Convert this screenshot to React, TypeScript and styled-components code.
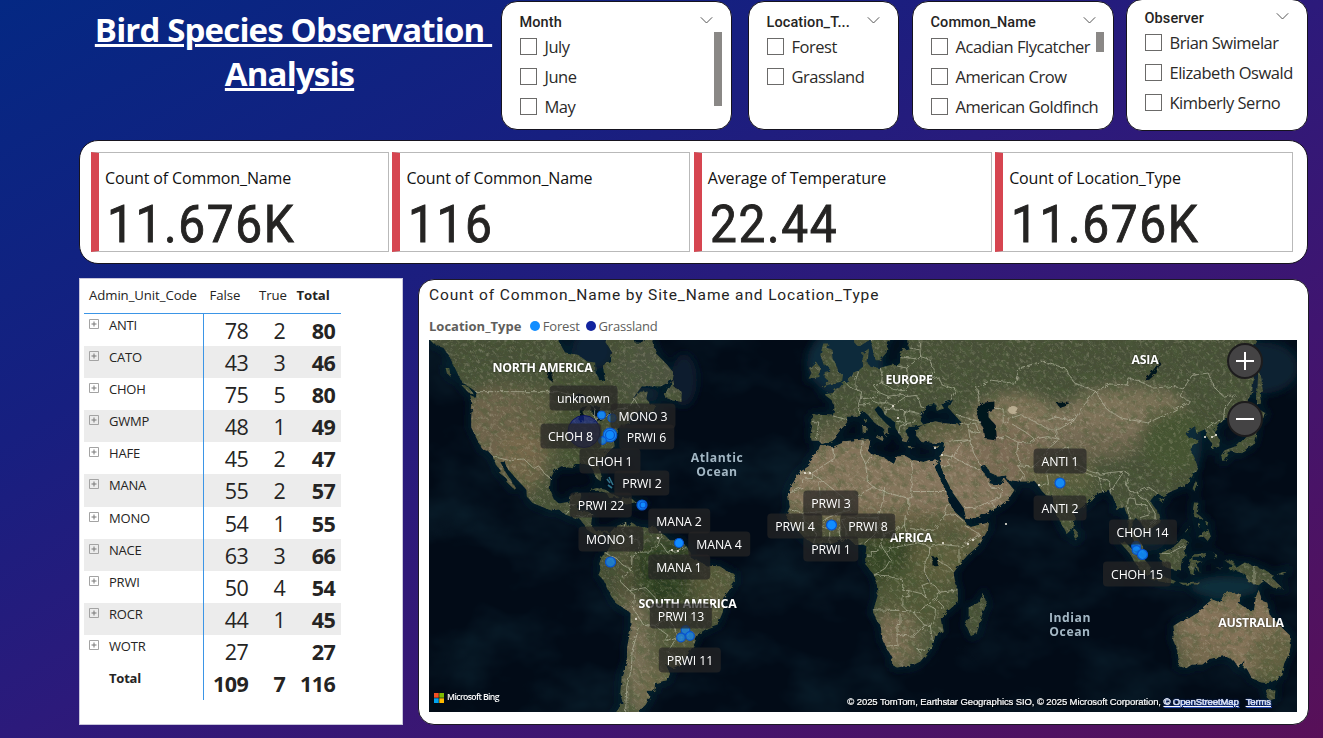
import React from "react";
import styled, { createGlobalStyle, css } from "styled-components";

const ui = `"Open Sans", "Noto Sans", sans-serif`;
const din = `Roboto, "Liberation Sans", sans-serif`;

const GlobalStyle = createGlobalStyle`
  * { box-sizing: border-box; }
  body { margin: 0; overflow: hidden; }
`;

const Page = styled.main`
  width: 1323px;
  height: 738px;
  overflow: hidden;
  background: linear-gradient(to bottom right, #042883 0%, #171f80 30%, #2c1a7b 50%, #401570 72%, #581058 100%);
  font-family: ${ui};
  color: #252423;
`;

const TopBar = styled.header`
  display: flex;
  align-items: flex-start;
  height: 140px;
`;

const Title = styled.h1`
  width: 500px;
  margin: 0;
  padding: 8px 0 0 79px;
  color: #fff;
  font-size: 33px;
  line-height: 44px;
  font-weight: 700;
  letter-spacing: -0.85px;
  text-align: center;
  white-space: pre;
`;

const TitleLine = styled.span<{ $hang?: number }>`
  display: block;
  margin-right: ${(p) => -(p.$hang ?? 0)}px;
  text-decoration: underline;
  text-decoration-thickness: 3px;
  text-underline-offset: 2px;
`;

/* ---------- slicers ---------- */

const SlicerBox = styled.section<{ $w: number; $gap: number; $raised?: boolean }>`
  width: ${(p) => p.$w}px;
  height: ${(p) => (p.$raised ? 132 : 129)}px;
  margin: ${(p) => (p.$raised ? -1 : 1)}px 0 0 ${(p) => p.$gap}px;
  padding: ${(p) => (p.$raised ? 10 : 12)}px 9px 0 18px;
  background: #fff;
  border: 1px solid #15131f;
  border-radius: 16px;
  flex: none;
`;

const SlicerHead = styled.div<{ $chevron: number }>`
  display: flex;
  justify-content: space-between;
  height: 17px;
  padding-right: ${(p) => p.$chevron}px;
  font: 500 14.5px/18px ${din};
  letter-spacing: 0.1px;
`;

const SlicerBody = styled.div`
  display: flex;
  justify-content: space-between;
`;

const Options = styled.ul`
  list-style: none;
  margin: 0;
  padding: 0;
`;

const Option = styled.li`
  display: flex;
  align-items: center;
  gap: 8px;
  height: 30.4px;
  font-size: 16.5px;
  letter-spacing: -0.48px;
  white-space: nowrap;
  color: #2b2a29;
`;

const Check = styled.span`
  width: 17px;
  height: 17px;
  border: 1px solid #6b6a69;
  background: #fff;
  flex: none;
`;

const ScrollThumb = styled.span<{ $h: number }>`
  width: 8px;
  height: ${(p) => p.$h}px;
  margin: 1px 0 0 -9px;
  background: #8a8886;
  flex: none;
`;

const Chevron = () => (
  <svg width="13" height="18" viewBox="0 0 13 18" fill="none" stroke="#555" strokeWidth="1">
    <path d="M0.8 3.3 L6.5 9 L12.2 3.3" />
  </svg>
);

type SlicerProps = {
  title: string; items: string[]; w: number; gap: number; chevron: number; thumb?: number; raised?: boolean;
};

const Slicer = ({ title, items, w, gap, chevron, thumb, raised }: SlicerProps) => (
  <SlicerBox $w={w} $gap={gap} $raised={raised}>
    <SlicerHead $chevron={chevron}>{title}<Chevron /></SlicerHead>
    <SlicerBody>
      <Options>
        {items.map((i) => <Option key={i}><Check />{i}</Option>)}
      </Options>
      {thumb ? <ScrollThumb $h={thumb} /> : null}
    </SlicerBody>
  </SlicerBox>
);

/* ---------- KPI cards ---------- */

const KpiPanel = styled.section`
  display: flex;
  gap: 3.4px;
  width: 1229px;
  height: 124px;
  margin-left: 79px;
  padding: 11px 0 0 11px;
  background: #fff;
  border: 1px solid #17141f;
  border-radius: 19px;
`;

const KpiCard = styled.article`
  width: 298px;
  height: 100px;
  border: 1px solid #b9b9b9;
  border-width: 1px 1.5px 1.5px 0;
  border-left: 8px solid #d64550;
  padding: 14px 0 0 6px;
  flex: none;
`;

const KpiLabel = styled.div`
  font-size: 16px;
  line-height: 22px;
  letter-spacing: -0.14px;
  color: #111;
`;

const KpiValue = styled.div`
  margin: 4px 0 0 2px;
  font: 400 52.5px/62px ${din};
  letter-spacing: 1.8px;
  -webkit-text-stroke: 0.9px #252423;
  transform: scaleX(0.91);
  transform-origin: 0 50%;
`;

/* ---------- matrix ---------- */

const Lower = styled.div`
  display: flex;
  align-items: flex-start;
  gap: 15px;
  margin: 14px 0 0 79px;
`;

const MatrixPanel = styled.section`
  width: 324px;
  height: 447px;
  padding: 0 0 0 4px;
  background: #fff;
  border: 1px solid #c9c6dc;
`;

const Row = styled.div<{ $shade?: boolean; $total?: boolean }>`
  display: grid;
  grid-template-columns: 120px 50px 37px 50px;
  width: 257px;
  height: 32.1px;
  background: ${(p) => (p.$shade ? "#ececec" : "#fff")};
  font-weight: ${(p) => (p.$total ? 700 : 400)};
`;

const HeadRow = styled(Row)`
  height: 35px;
  border-bottom: 1px solid #3b95e6;
  font-size: 13.2px;
  line-height: 32px;
  letter-spacing: -0.08px;
`;

const HeadCell = styled.span<{ $x: number; $bold?: boolean }>`
  padding-left: ${(p) => p.$x}px;
  white-space: nowrap;
  font-weight: ${(p) => (p.$bold ? 700 : 400)};
`;

const CodeCell = styled.span`
  display: flex;
  gap: 10px;
  padding: 1px 0 0 5px;
  border-right: 1px solid #3b95e6;
  font-size: 13px;
  line-height: 21px;
  letter-spacing: -0.2px;

  svg { margin-top: 4px; flex: none; }
`;

const NumCell = styled.span<{ $bold?: boolean }>`
  padding-right: 5.6px;
  font-size: 21.5px;
  line-height: 33px;
  letter-spacing: -0.5px;
  text-align: right;
  ${(p) => p.$bold && css`font-weight: 700;`}
`;

const Expand = ({ hidden }: { hidden?: boolean }) => (
  <svg width="10" height="10" viewBox="0 0 10 10" fill="none" stroke="#a3a3a3" visibility={hidden ? "hidden" : "visible"}>
    <path d="M.5 .5h9v9h-9z" />
    <path d="M2.5 5h5M5 2.5v5" stroke="#777" />
  </svg>
);

const rows: [string, string, string, string][] = [
  ["ANTI", "78", "2", "80"], ["CATO", "43", "3", "46"], ["CHOH", "75", "5", "80"],
  ["GWMP", "48", "1", "49"], ["HAFE", "45", "2", "47"], ["MANA", "55", "2", "57"],
  ["MONO", "54", "1", "55"], ["NACE", "63", "3", "66"], ["PRWI", "50", "4", "54"],
  ["ROCR", "44", "1", "45"], ["WOTR", "27", "", "27"], ["Total", "109", "7", "116"],
];

/* ---------- map ---------- */

const MapPanel = styled.section`
  width: 891px;
  height: 446px;
  margin-top: 1px;
  padding: 5px 10px 0;
  background: #fff;
  border: 1px solid #1d1926;
  border-radius: 16px;
`;

const MapTitle = styled.h2`
  margin: 0;
  font: 400 15.5px/20px ${din};
  letter-spacing: 0.86px;
  color: #252423;
`;

const Legend = styled.div`
  display: flex;
  align-items: center;
  height: 35px;
  padding-top: 6px;
  font-size: 13px;
  letter-spacing: -0.2px;
  color: #605e5c;

  b { margin-right: 9px; letter-spacing: 0; }
`;

const LegendItem = styled.span<{ $c: string }>`
  display: flex;
  align-items: center;
  gap: 2.5px;
  margin-right: 6.5px;

  &::before {
    content: "";
    width: 10px;
    height: 10px;
    border-radius: 50%;
    background: ${(p) => p.$c};
  }
`;

const MapView = styled.div`
  position: relative;
  width: 868px;
  height: 372px;
  overflow: hidden;
  background: #020b17;

  > svg { display: block; }
`;

const Pin = styled.span<{ $x: number; $y: number }>`
  position: absolute;
  left: ${(p) => p.$x - 429}px;
  top: ${(p) => p.$y - 340}px;
  transform: translate(-50%, -50%);
  white-space: nowrap;
`;

const Tag = styled(Pin)`
  padding: 0 8px;
  border-radius: 4px;
  background: rgba(38, 37, 37, 0.7);
  color: #fff;
  font-size: 12.3px;
  line-height: 25px;
  letter-spacing: -0.1px;
`;

const Region = styled(Pin)`
  color: #fff;
  font-size: 12.3px;
  line-height: 14px;
  font-weight: 700;
  letter-spacing: -0.25px;
  text-shadow: 0 0 2px rgba(0, 0, 0, 0.7);
`;

const Ocean = styled(Pin)`
  color: #a3b7c4;
  font-size: 12.2px;
  line-height: 13.5px;
  font-weight: 700;
  letter-spacing: 0.55px;
  text-align: center;
  white-space: pre;
`;

const ZoomButton = styled.button`
  position: absolute;
  right: 34px;
  width: 36px;
  height: 36px;
  padding: 0;
  border: 2px solid #1d1c1d;
  border-radius: 50%;
  background: #444344;

  svg { display: block; }
`;
const ZoomIn = styled(ZoomButton)`top: 3px;`;
const ZoomOut = styled(ZoomButton)`top: 61px;`;

const Bing = styled.div`
  position: absolute;
  left: 5px;
  bottom: 7px;
  display: flex;
  align-items: center;
  gap: 3px;
  color: #fff;
  font-size: 8.7px;
  line-height: 15px;
  font-weight: 600;
  letter-spacing: -0.62px;
`;

const Credits = styled.div`
  position: absolute;
  right: 26px;
  bottom: 3px;
  color: #fff;
  font: 400 9.5px/14px "Liberation Sans", Arial, sans-serif;
  letter-spacing: -0.1px;
  text-shadow: 1px 1px 1px #000;
  white-space: nowrap;
  -webkit-text-stroke: 0.2px #fff;
`;

const CreditLink = styled.span`
  margin-right: 7px;
  color: #c3d1f2;
  text-decoration: underline;
  text-shadow: 0 0 2px #2c50c0, 1px 1px 1px #2344ac;

  &:last-child { margin-right: 0; }
`;

/* Web Mercator projection; coordinates are lon,lat pairs. */
const project = (lon: number, lat: number) => {
  const y = 558 - 169 * Math.log(Math.tan(Math.PI / 4 + (lat * Math.PI) / 360));
  return `${(838 + 2.95 * lon).toFixed(1)} ${y.toFixed(1)}`;
};
const line = (pts: string) =>
  "M" + pts.trim().split(/\s+/).map((p) => { const [a, b] = p.split(",").map(Number); return project(a, b); }).join("L");
const shape = (pts: string) => line(pts) + "Z";

const land = [
  // North America
  "-140,62 -139.5,59.8 -137,58.5 -134,58 -132,56.5 -130.5,54.8 -129,53 -127.5,51 -124.5,49.8 -122.8,49 -122.6,47.6 -124.7,48.3 -124,46.2 -124.3,43 -124.3,40.4 -122.5,37.6 -120.6,34.6 -118.4,33.9 -117.2,32.7 -116,30.3 -114.2,28.2 -115,27.8 -112.3,26 -112,24.6 -110,22.9 -109.5,23.3 -111,25.6 -112.7,28 -114.7,31.3 -113,31.2 -112.2,29 -110.5,27.5 -109.2,26 -107,24 -105.6,22.5 -105.5,20.4 -103.5,18.3 -101.5,17.5 -97,15.8 -94.7,16.2 -92.3,14.5 -89.5,13.5 -87.5,13 -85.8,11 -85.6,10 -83.6,8.6 -81.5,7.6 -80,7.3 -79.5,8.9 -78,8.2 -77.3,8.5 -79.5,9.4 -82,9 -83.7,11 -83.3,14.8 -85.5,15.9 -88.3,15.7 -88,18 -87,20.5 -87.2,21.5 -90.3,21 -91,18.8 -94.5,18.2 -96.3,19.5 -97.7,22.5 -97.4,26 -96,28.5 -93.8,29.7 -90,29.1 -89.3,30.3 -86,30.3 -84,30 -82.7,28 -81.8,26 -80.4,25.2 -80.2,27 -81.3,30.5 -79,33.3 -75.7,35.3 -76,37 -75,38.6 -74,40.6 -70.5,41.6 -70.7,43 -67,44.8 -65.5,43.6 -61.2,45.6 -63.7,46 -65,47.5 -64.5,49 -67,49 -70,47 -66.5,50.2 -60,50.2 -56,51.6 -55.7,53 -58,54.7 -61.5,56.7 -62.5,58.3 -64,60.5 -66,58.7 -69,58.8 -70,61 -78,62.3 -77.5,60 -78.5,58.7 -76.6,57 -77,55.5 -79.7,54.5 -79,51.5 -80.5,51.2 -82.2,53 -82.3,55.1 -85,55.3 -88,56.5 -92.5,57 -94.7,59 -94.5,62",
  // Newfoundland, Vancouver Island, Haida Gwaii, Caribbean
  "-59,47.8 -57.5,50 -55.8,51.5 -55.5,50 -53,49 -53,46.7 -56,47",
  "-128,50.7 -125.3,50 -123.4,48.4 -125.3,48.8",
  "-133,54 -131.8,54 -131.3,52.2 -132.6,53",
  "-84.8,22 -82,23.1 -79,22.6 -77,21.5 -74.3,20.2 -77.5,19.9 -78.5,21.5 -82,22.5",
  "-74.3,18.4 -73,19.9 -69.8,19.7 -68.5,18.6 -71.5,17.8",
  "-78.3,18.3 -76.3,18.1 -77.2,17.8", "-67.2,18.4 -65.7,18.4 -65.8,18 -67.2,18",
  // South America
  "-77.3,8.5 -75.5,10.6 -74,11.2 -71.8,12.3 -71.5,10.8 -70,12 -68,10.6 -64.5,10.2 -62,10.6 -60.8,9 -58.5,7.5 -57,6 -54,5.9 -51.7,4.2 -50,1.8 -50,0 -48,-0.7 -44.5,-2.6 -40,-2.9 -37,-4.8 -35.3,-5.3 -34.9,-8 -37,-11 -39,-13.5 -39,-17.8 -40.8,-22 -44,-23 -47.5,-25 -48.7,-28 -50.5,-30.5 -53.5,-34 -56,-34.9 -58.3,-34 -57,-36.5 -57.8,-38.2 -62,-39 -62.3,-41 -65,-41 -63.7,-42.6 -65.3,-44.5 -67.5,-46 -66,-47.5 -66,-50 -75,-50 -75.5,-46.5 -73,-44 -73.8,-41.5 -73.3,-37 -71.6,-33 -71.5,-29 -70.3,-23.5 -70.3,-18.3 -75.5,-15 -77.2,-12 -79.5,-7.5 -81.2,-5.8 -80.3,-3.3 -81,-2 -80,0.7 -78.7,1.6 -77.2,4 -77.5,7",
  // Africa, Madagascar
  "-6,35.8 -2,35.1 3,36.8 9.8,37.3 11,36.9 10.2,34.3 11,33.2 15.3,32.3 19,30.3 20,32.5 23,32.6 25,31.6 29,30.9 31,31.5 34.2,31.3 32.5,29.9 33.8,27.5 35.5,24 37.2,21 37.4,18.8 39.5,15.5 43,12.5 43.2,11.5 45,10.5 51.2,11.9 50.8,9.5 48,4.5 44,1 41.5,-1.8 39.2,-5 39.5,-7 40.6,-10.8 40.5,-15 37,-17.8 34.8,-20 35.5,-24 32.8,-26 32,-28.8 28,-33 25.7,-34 20,-34.8 18.4,-34 18.2,-31.7 15.2,-27 14.5,-22.8 11.8,-18 13.5,-12.5 13.2,-9 12,-5.5 9.3,-2 9.3,0.5 9.7,4 8.5,4.6 6,4.3 4,6.3 1,5.9 -2,4.8 -4.5,5.2 -7.6,4.4 -11.5,6.9 -13.2,8.8 -15,11 -16.8,12.5 -17.5,14.7 -16.3,17 -17,21 -15.8,23.9 -13,27.8 -9.7,29.8 -9.7,31.4 -6.8,34",
  "49.3,-12 50.5,-15.5 49,-18.5 47,-25 45,-25.5 43.3,-22 44.3,-19.5 44.3,-16.5 47.5,-15",
  // Eurasia
  "5,65 5,61 5.5,58.8 7,58 10,59 11.2,59.2 11.5,58 12.8,55.5 14.2,55.5 16.5,57 17,58.7 19,60 17.5,62 22,62 21.5,60.8 23,59.9 28,60.3 30,59.9 28,59.5 23.5,59.2 23.6,58.6 24.3,57.5 22,57.6 21,56.5 21,55 19.8,54.5 18.5,54.7 14,54 11,54.2 10,55 10.5,57.7 8.2,56.8 8.5,54.3 7,53.5 4.7,53 3.5,51.5 1.6,50.8 0,49.5 -1.5,49.6 -2,48.7 -4.7,48.4 -2.5,47.3 -1.2,45.5 -1.7,43.4 -8,43.7 -9.2,43 -8.8,40.5 -9.4,38.7 -8.9,37 -6.5,36.9 -5.6,36 -2,36.8 -0.7,37.7 0,39 3.2,41.8 3,43.1 6.5,43.2 8.8,44.4 10.3,43.5 12.3,41.7 15.6,40 16,38.2 17,39 17,40.4 18.4,40 16,41.7 13.6,43.6 12.4,44.9 13.6,45.7 14.8,45 16,43.5 19.4,41.8 19.5,40.3 21.2,38.2 21.7,36.8 23.2,36.5 24,37.8 22.8,39.5 24,40.5 26.2,40.7 28.8,41.1 28,42 28,43.5 30.5,46 33,46.2 33.5,44.6 36,45.1 35,46.2 39,47.2 37.5,45.2 41.5,42 41,41.2 36,41.5 33,42 29,41.2 26.4,40 26.5,38.3 28,36.8 30.6,36.6 33,36.1 36,36.8 35.8,35 34.5,31.5 34.9,29.5 36.5,26 39,21.5 42.7,16.5 43.5,12.8 48,14 52,15.8 55,17.5 57.8,19.5 59.8,22.5 58.5,23.7 56.4,26.2 56,24.8 54,24.1 51.5,24.5 51.3,26 50.2,26.5 48,29.8 50,30.1 51.5,27.8 54.5,26.6 57,27 57.5,25.6 61.5,25.1 66.7,25.2 68,23.8 69,22.3 70.5,20.8 72.8,20.5 73,17 74.8,13 77.5,8.1 79.8,10.3 80.2,13.5 80.3,15.8 82.3,16.7 86.5,20 88,21.7 91.8,22.5 94.3,18 94.3,16 97,17 98.5,13 98.4,9 100.3,6 101.5,2.9 103.7,1.4 103.4,4 101.5,6.9 100,9.3 99.8,12 100.9,13.4 102.5,12 104.8,8.7 106.8,10.4 109.3,12 108.5,15.5 105.8,19 108,21.5 110,20.5 113.5,22.2 117,23.5 119.7,26 121.9,29.5 121,31.8 119.2,35 122.5,37.2 119,37.5 117.8,39 121,40.8 121.5,39 124.5,40 125,38 126.5,36.5 126.4,34.5 129.3,35.3 129.3,37.2 127.5,39.5 130.7,42.3 133,42.8 136,44.5 140.3,48.5 141,52.5 137.5,54 135.2,54.8 139,57 142,59.3 144,62 144,66",
  // British Isles, Mediterranean islands
  "-5.7,50 -3,50.6 1.4,51.2 1.7,52.7 0,53.2 -0.2,54 -1.8,55.8 -2.2,57.6 -4,57.8 -3.2,58.6 -5,58.6 -6,56.5 -4.8,54.6 -3,54.2 -3,53.4 -4.5,53.2 -4.5,52 -3,51.4",
  "-10,51.8 -6.3,52.2 -6,54 -7.5,55.3 -9.8,54 -9,53",
  "12.5,38 15.6,38.2 15.2,36.8", "8.3,40.8 9.7,40.8 9.5,39.1 8.4,39", "8.7,42.4 9.5,42.9 9.3,41.5",
  "23.6,35.5 26.2,35.2 24,35", "32.4,35 34.4,35.6 33.8,34.9",
  // Asian islands
  "79.8,8 80.3,9.7 81.3,8.6 81.8,7 80.5,6",
  "108.8,19.3 110.8,20 110,18.3", "120.2,23 121.2,25.2 121.8,24.8 120.8,22",
  "130,33 131,34.3 135.5,35.6 137,37 139.5,38.5 140,40.8 141.5,41.3 142,39.5 140.8,35.8 138.7,34.7 135.8,33.5 133,34.2 131.3,31.4 130.2,31.3",
  "140,41.6 140.4,43.2 141.8,45.4 145.3,43.8 143.2,42", "142,46 142.2,50 142.5,54.2 143.5,52 144,49 143,49 143.3,46.7",
  "120.3,16 120.7,18.5 122.2,18.4 121.5,15 124,13 120.8,13.8", "122,7 123.5,8.6 125.5,9.8 126.4,7.3 125.3,5.8 124,7.2",
  "124.5,12.5 125.5,12 125,10.2", "122,11.8 123.2,11.3 122.2,10.5", "117.3,8.3 119.5,11.2 118.6,9.5",
  "109,1.5 111.3,2.5 113,3.2 115.5,5.3 116.8,6.9 119,5.2 117.6,3.3 117.8,0.9 116.5,-1.2 116,-3.8 114.5,-4.1 111.8,-3.4 110.2,-2.8 109.2,0",
  "95.3,5.6 97.5,5.2 100.4,2.3 103.5,0 106,-3.1 105.8,-5.8 104.5,-5.8 102.3,-4 100.4,-1 98.7,1.7",
  "105.3,-6.7 108.5,-6.7 110.8,-6.4 114.4,-7.8 114.4,-8.7 110,-8.1 106.5,-7.4",
  "119.8,0.5 120.8,1.3 125,1.6 123.8,0.4 120.2,0.4 120.2,-1 123.3,-0.9 121.6,-2 122.3,-3.5 122.5,-5 121,-2.8 120.4,-5.6 119.5,-5.5 119,-3.5",
  "115.5,-8.3 119,-8.4 122.8,-8.3 122,-8.9 117,-9", "123.6,-10.3 127,-8.4 125,-9.5", "127.5,1.5 128.5,1 128,-0.8", "128,-3.2 130.8,-3.3 129,-3.5",
  "131,-0.8 134,-0.9 135,-3.3 137.9,-1.5 141,-2.6 144.5,-3.9 147.8,-6 147,-6.7 150.8,-10.3 147.5,-10 144.5,-7.7 142.5,-9.2 139,-8.1 138,-5.5 135,-4.4 132.8,-4 132.5,-2.8 134,-2.5",
  "148.5,-5.7 152,-4.2 151.5,-5.6",
  // Australia, Tasmania
  "113.7,-22.5 114.2,-26 113.3,-26 115,-30 115.7,-33.5 115.1,-34.3 118,-35 120,-33.9 123.5,-33.9 126,-32.3 131.2,-31.5 134.2,-32.8 135.8,-34.8 137.8,-32.7 137.5,-35 138.5,-35 140.5,-38 143.5,-38.8 146.3,-39 150,-37.4 151.3,-33.5 153.1,-30.5 153.5,-28 153,-25.2 150.8,-23.3 149.5,-22 146.3,-19 145.5,-15 143.8,-14.4 142.6,-10.8 141.7,-13 141,-17.5 139.3,-17.4 135.5,-15 136.8,-12.2 132.6,-11.4 130.7,-12.5 129.5,-14.9 126.8,-13.9 123.6,-16.5 122.2,-18.2 119,-20 116.8,-20.6",
  "144.7,-40.8 148.3,-40.9 148,-43 146,-43.5",
].map(shape).join("");

const lakes = [
  "-92,46.7 -90,47.8 -88,48.6 -86,48.4 -84.7,46.6 -87,46.6 -88,47.2",
  "-87.5,41.7 -86.2,42 -86.2,44.6 -85,45.8 -87.3,45.2 -87.8,43",
  "-84,46 -80.5,45.5 -81.7,43.2 -82.6,43.3 -83.5,44.2", "-83.2,41.7 -79,42.8 -81.5,42.6", "-79.6,43.3 -76.3,44 -77,43.4",
  "-98.5,52 -97.5,54 -96.6,51", "-117,65 -111,61 -117,61",
  "47,45 49,46.5 53,46.8 53,45 51,44.5 51,43 53.5,41 53.9,37 50,37.4 49.3,40.3 47.5,42.5",
  "104,51.5 109.5,55.5 108,53 105.5,51.6", "74,46.5 79,46.5 75,45.5", "32,-2.5 32,0.3 34,0 33.7,-2.4", "29.3,-4 30,-7 31,-8.5 29.7,-6",
].map(shape).join("");

const borders = [
  "-123,49 -95,49 -89.5,48.2 -84.5,46.5 -82.5,45.3 -82.5,42.5 -79,43 -75,45 -71,45.2 -69,47.4 -67.5,45.5",
  "-117,32.5 -111,31.3 -108,31.7 -106.5,31.8 -103,29 -101.5,29.8 -99.5,27.5 -97.3,26", "-92.2,14.6 -91,16 -91,17.8 -89,17.8", "-89.2,14.4 -86.7,13.8 -83.3,15",
  "-72,12 -73,9 -71,7 -67.5,6 -67.2,2 -69.8,1 -70,-4 -73,-2.3 -75.3,0 -78.7,1.5", "-70,-4 -73,-6 -73.8,-8 -70.6,-11 -69,-12.4 -69.4,-17.5",
  "-67.2,2 -64,2 -60.8,5 -59.8,8.2", "-60,5 -58,2 -54.6,2.4 -51.7,4", "-70.6,-11 -65.3,-10 -62,-13.3 -60.2,-16.2 -57.8,-18 -58.2,-20 -62,-22.3 -66,-22 -69,-17.5",
  "-57.8,-20 -55.8,-22.3 -54.4,-25.5 -58.5,-27.2 -57.8,-25.2 -62.3,-22.3", "-54.4,-25.5 -57.6,-30.2 -53.4,-33.7", "-67.5,-23 -69.8,-30 -70,-35 -71.6,-40 -72,-46 -72.5,-50",
  "-2,35 -1.2,32 -4.8,30 -8.7,27.7 -13,27.7", "-8.7,27.5 -8.7,26 -12,25.9 -12,23.4 -16.8,21.3", "-8.7,27.3 -4.8,25 3.2,19 4.2,19.2 12,23.5 14.2,22.5 24,19.5 24,20 25,20 25,31.6", "25,22 36.8,22",
  "8.3,37 7.6,33.5 9.4,30.3 10,25 12,23.5", "9.4,30.3 11.5,33.1", "-4.8,25 -6.5,25 -5.5,15.5 -12,15 -16.5,16.2", "-12,15 -11.5,12.4 -8,10.2 -7.5,7.5 -8.3,5", "4.2,19.2 4,16 -0.2,15 -4,13.3 -5.5,10.5 -2.8,9.8 -2.8,5",
  "4,13.5 1,12.8 2.7,9.5 2.7,6.4", "1,11 0.5,8.5 1.2,6", "4,13.5 13.5,13.5 15.5,20 15.8,23.4", "13.5,13.5 14.5,11 12,7.5 9,5", "14.5,11 15.5,8 22.5,11 22.8,14 24,15.7 24,19.5",
  "15.5,8 14.5,4.8 16,2.2 18.5,3.6 22.5,4.2 27.4,5.1 23,9 22.5,11", "27.4,5.1 31,3.8 34,4.5 36,4.5 41.8,3.9 48,8 43,11", "24,10 28,9.5 33,9.8 34.2,12 36.3,14.5 37,17 38.5,18", "36.3,14.5 40,14.4 42.5,12.5",
  "41,-1.7 41,3", "34,-1 37.7,-3 39,-4.6", "31,3.8 31,1.5 29.6,-1.4 29.3,-4.4 31,-8.3 33,-9.5 34.6,-11.5 40.5,-10.7", "14.5,4.8 13.2,2.2 11.3,2.2 11.3,1 9.5,1", "16,2.2 17.8,-0.5 16,-3.5 12.2,-5.8 16.8,-6 19.5,-7 21.8,-7.3 22,-11 24,-11 24,-13 22,-13 22,-16.2 23.4,-17.6 11.8,-17.3",
  "24,-11 28.4,-12 29.8,-13.3 29.5,-12 28.5,-9.2 31,-8.3", "23.4,-17.6 25.2,-17.8 27,-18 30.3,-15.6 33,-14 34.6,-11.5", "34,-14.5 35.5,-16 35,-17", "21,-18.3 21,-22 20,-22 20,-28.4 16.5,-28.6", "20,-25 22.7,-25.4 25.6,-25.6 29.4,-22.2 31.3,-22.4 32,-26.8", "25.2,-17.8 27.7,-20.5 29.4,-22.2", "30.3,-15.6 33,-17 32.8,-20 31.3,-22.4", "27,-29.6 29.3,-29.5 28,-30.7 27,-29.6",
  "-1.7,43.3 3,42.4", "-8.8,41.9 -6.5,41.8 -7.3,37.3", "7.5,43.8 6.8,46 7.6,47.5 8,49 6.2,49.5 4,50 2.5,51", "6.2,49.5 6,51.5 7,53.3", "7,46 9,46 12,46.8 13.6,46.4 16,46.5 17,48 14,48.8 12.8,47.8 9.6,47.5 7.6,47.5", "14,48.8 12.2,50.2 14.8,51 15,52.5 14.3,54", "14.8,51 18.8,49.5 22.5,49.2 24,50.5 23.6,52.5 23.3,54 20,54.4",
  "17,48 22,48.4 23,47.9 26.8,48.2 28.2,45.5 29.6,45.3", "16,46.5 18.8,45.9 22.7,47.8", "18.8,45.9 19.2,44.8 22.5,44.6 28.5,43.8", "22.5,44.6 23,41.4 26.5,41.9", "19.3,42 21,41.9 23,41.4", "16,43.6 16,45.2 19,45", "20.5,38.9 21,40.8 23,41.4", "24,50.5 23.6,51.6 30.5,51.4 34,52.2 35.5,50.4 40,49.6 38.3,47.2", "31,51.5 32.5,53.5 31,55.7 28,56.2 23.3,54", "28,56.2 27.5,59.3", "24.3,57.8 27.5,57.5", "21,56.2 26.5,55.8", "30,60 28,61.5", "11.3,59 12.3,61.5",
  "41.5,41.5 44,41.2 44.8,37.2 36.5,36.7", "40,43.5 45,42.6 48.5,41.8", "44,41.2 46.5,41.5 48,39 44.5,39.5", "35.8,33 39,32.3 42,36.5 44.8,37.2 46,33.5 48.3,30", "39,32.3 37,31.4 37.8,30 35,29.4", "39,32.3 42,31 46.5,29.1 48.2,28.6", "43,16.8 47,17 52,19 55,20 55.5,23 52,23 51,24.5", "52,19 53,16.8",
  "54,37.4 57,38.2 61,36.5 60.6,33 61.8,31 60.9,29.8 63,27.2 61.6,25.2", "61,36.5 64.5,36.3 66.5,37.4 71,38 75,37.3", "60.9,29.8 66,29.5 69.3,32 71,34.5 74.5,37", "68.2,23.8 71,24.5 70.5,28 74.6,31 74,33.5 77.8,35.5 79,32.5 81,30.2 86,28 88.8,27.3 92,27.8 97,28.2 98.7,27.3 97.7,24 99,22 101.5,21.8 105.3,23.3 108,21.6", "81,30.2 80.2,28.8 88,26.4 88.5,26.4 89.8,22", "88.5,26.2 92,25.2 92.3,21", "97,28.2 94.5,25 92.5,22", "98,17 98.5,19.8 100.5,20.2 101,17.8 104.5,17.8 105.6,14.5 102.5,13.6 102.8,12", "101.5,21.8 102,20.5 104.8,19.2 107.5,15 107.5,12.3 105,10.8", "98,17 99,13",
  "48,46.5 47,50 52,51.5 60,50.8 61.5,54 69,55.3 77,54 80,51 87.3,49.1 82.5,45.2 80,42.2 75,40 71,40 69,41 62,43.6 58.6,42.8 56,41.3 56,45 53,45.2", "66.5,37.4 64,39 59,41.3", "80,42.2 74,43 71,42.3", "74,40 73.7,38 75,37.3",
  "87.3,49.1 92,50.7 98,50.5 98.3,52 102,51.3 107,49.8 114,50.2 117,49.6 120,52.5 125.5,53 127.5,50 131,47.8 134.7,48.3 131,45 130.7,42.4", "87.3,49.1 91,45 96,42.8 105,41.6 111.5,43.8 119.5,46.7 116,48 117,49.6", "124.5,40 128,42 130.6,42.4", "126.8,37.8 128.4,38.6",
  "109.8,1.6 112.5,1.5 115,3 117.6,4.2", "141,-2.6 141,-9",
].map(line).join("");

/* Climate tints laid over the base land colour: cx, cy, rx, ry, fill, opacity. */
const tints: [number, number, number, number, string, number][] = [
  [502, 425, 38, 45, "#76694f", 0.85], [500, 375, 38, 18, "#4a5239", 0.6], [540, 425, 26, 40, "#626044", 0.7], [525, 460, 22, 32, "#7b6a4d", 0.8],
  [580, 430, 28, 40, "#435030", 0.7], [650, 370, 34, 34, "#515642", 0.6],
  [665, 575, 55, 32, "#2a3c20", 0.9], [712, 582, 22, 40, "#605e3e", 0.8], [625, 585, 10, 50, "#666047", 0.65], [638, 655, 14, 60, "#83765d", 0.8], [676, 640, 24, 40, "#565b3c", 0.8], [665, 690, 22, 28, "#736c4c", 0.75],
  [870, 480, 110, 42, "#85745c", 1], [965, 480, 60, 42, "#86755d", 1], [880, 522, 110, 12, "#645f40", 0.85], [890, 560, 35, 27, "#354325", 0.9], [940, 560, 32, 24, "#666240", 0.8], [915, 600, 40, 30, "#535a39", 0.9], [895, 640, 26, 28, "#7e7055", 0.9], [925, 645, 15, 25, "#575d3e", 0.7], [977, 530, 14, 18, "#7b694e", 0.8],
  [852, 430, 35, 11, "#67634a", 0.7], [955, 430, 40, 10, "#6b6549", 0.85], [1015, 420, 44, 27, "#83755b", 0.95], [1020, 456, 48, 30, "#7b6b54", 0.95],
  [1090, 425, 55, 24, "#7f735b", 0.95], [1130, 403, 55, 17, "#80735a", 0.9], [1090, 446, 50, 14, "#706650", 0.9], [1060, 475, 35, 22, "#606141", 0.85], [1075, 505, 22, 23, "#535a3b", 0.8], [1175, 440, 32, 32, "#455431", 0.8],
  [1238, 630, 62, 48, "#847259", 1], [1200, 660, 28, 20, "#6e6549", 0.6], [1275, 658, 25, 28, "#5f603f", 0.75], [1240, 592, 58, 10, "#5e5d41", 0.75],
];

const snow: [number, number][] = [[893, 406], [898, 418], [935, 448], [942, 455], [1006, 524], [943, 543], [968, 544], [973, 540], [1205, 437], [1212, 437], [1216, 435], [660, 532], [658, 538], [672, 550], [678, 551], [636, 619], [805, 473], [810, 473], [1039, 485]];

const WorldMap = () => (
  <svg width="868" height="372" viewBox="429 340 868 372">
    <defs>
      <clipPath id="land"><path d={land} /></clipPath>
      <filter id="rough" x="0" y="0" width="100%" height="100%">
        <feTurbulence type="fractalNoise" baseFrequency="0.22" numOctaves="3" seed="4" result="n" />
        <feDisplacementMap in="SourceGraphic" in2="n" scale="4" />
      </filter>
      <filter id="soft" x="-20%" y="-20%" width="140%" height="140%"><feGaussianBlur stdDeviation="7" /></filter>
      <filter id="shelf" x="-5%" y="-5%" width="110%" height="110%"><feGaussianBlur stdDeviation="4" /></filter>
      <filter id="grainDark" x="0" y="0" width="100%" height="100%">
        <feTurbulence type="fractalNoise" baseFrequency="0.11 0.15" numOctaves="5" seed="8" />
        <feColorMatrix values="0 0 0 0 0.07  0 0 0 0 0.11  0 0 0 0 0.04  0 3.4 0 0 -1.5" />
      </filter>
      <filter id="grainLight" x="0" y="0" width="100%" height="100%">
        <feTurbulence type="fractalNoise" baseFrequency="0.3" numOctaves="4" seed="21" />
        <feColorMatrix values="0 0 0 0 0.72  0 0 0 0 0.65  0 0 0 0 0.52  0 2.6 0 0 -1.3" />
      </filter>
      <filter id="swell" x="0" y="0" width="100%" height="100%">
        <feTurbulence type="fractalNoise" baseFrequency="0.012 0.018" numOctaves="4" seed="12" />
        <feColorMatrix values="0 0 0 0 0.02  0 0 0 0 0.13  0 0 0 0 0.18  0 2 0 0 -0.85" />
      </filter>
    </defs>
    <rect x="429" y="340" width="868" height="372" fill="#020b17" />
    <rect x="429" y="340" width="868" height="372" filter="url(#swell)" opacity="0.22" />
    <g filter="url(#shelf)">
      <path d={land} fill="#0a2635" stroke="#082230" strokeWidth="6" opacity="0.65" />
      <ellipse cx="592" cy="350" rx="20" ry="20" fill="#0a2434" />
      <ellipse cx="640" cy="395" rx="20" ry="8" fill="#082030" />
      <ellipse cx="845" cy="362" rx="38" ry="34" fill="#0a2a3b" />
      <ellipse cx="684" cy="380" rx="13" ry="26" fill="#081f2e" />
      <ellipse cx="1262" cy="368" rx="36" ry="26" fill="#082433" />
      <ellipse cx="1188" cy="445" rx="14" ry="30" fill="#0a2a39" />
      <ellipse cx="1225" cy="587" rx="34" ry="11" fill="#0c2d3b" />
      <ellipse cx="1150" cy="535" rx="18" ry="16" fill="#09212f" />
    </g>
    <g filter="url(#rough)">
      <g clipPath="url(#land)">
        <rect x="420" y="330" width="890" height="392" fill="#475037" />
        <g filter="url(#soft)">
          {tints.map(([cx, cy, rx, ry, f, o], i) => <ellipse key={i} cx={cx} cy={cy} rx={rx} ry={ry} fill={f} opacity={o} />)}
        </g>
        <rect x="429" y="340" width="868" height="372" filter="url(#grainDark)" opacity="0.42" />
        <rect x="429" y="340" width="868" height="372" filter="url(#grainLight)" opacity="0.28" />
      </g>
      <path d={lakes} fill="#04131f" />
      <path d={borders} fill="none" stroke="#bfc2ab" strokeWidth="1" opacity="0.6" />
    </g>
    {snow.map(([x, y], i) => <circle key={i} cx={x} cy={y} r="1.1" fill="#eee9dc" />)}
    <ellipse cx="1013" cy="410" rx="5" ry="4" fill="#cbbfa2" opacity="0.75" filter="url(#rough)" />
    <path d="M607 479l3 4m-1 -6l4 8m-5 0l4 3" stroke="#3f8da6" strokeWidth="1.6" opacity="0.8" />
  </svg>
);

const Dots = styled.svg`
  position: absolute;
  inset: 0;
`;

const dots: [number, number, number, number][] = [
  [601.5, 415, 4, 0.9], [612, 418, 4, 0.45], [610, 435, 6.8, 0.9], [610, 435, 4.5, 0.9], [602.5, 440.5, 3.8, 0.7],
  [642, 505, 5, 0.9], [643, 505, 3, 1], [679, 543, 4.5, 1], [610.5, 562, 5, 0.72],
  [685.5, 630, 4.3, 0.7], [690, 636, 4.3, 0.7], [681, 637.5, 4.3, 0.7],
  [831.5, 525, 5, 1], [1060, 483, 5, 0.95], [1136, 546, 4.3, 0.75], [1136.5, 550, 4.3, 0.75], [1142.5, 554.5, 5, 0.9],
];

const tags: [string, number, number][] = [
  ["unknown", 583.5, 398], ["MONO 3", 643, 416], ["CHOH 8", 570.5, 436], ["PRWI 6", 646.5, 437], ["CHOH 1", 610, 461],
  ["PRWI 2", 642, 483], ["PRWI 22", 601, 505], ["MANA 2", 679, 521], ["MONO 1", 610.5, 539], ["MANA 4", 719, 544],
  ["MANA 1", 679, 567], ["PRWI 13", 681, 616], ["PRWI 11", 690, 660], ["PRWI 3", 831, 503], ["PRWI 4", 795, 526],
  ["PRWI 8", 868, 526], ["PRWI 1", 831, 549], ["ANTI 1", 1060, 461], ["ANTI 2", 1060, 508], ["CHOH 14", 1142.5, 532], ["CHOH 15", 1137, 574],
];

const regions: [string, number, number][] = [
  ["NORTH AMERICA", 542.5, 368], ["EUROPE", 909, 380], ["ASIA", 1145, 360], ["AFRICA", 911, 538], ["SOUTH AMERICA", 687.5, 604], ["AUSTRALIA", 1251, 623],
];

const kpis = [
  ["Count of Common_Name", "11.676K"], ["Count of Common_Name", "116"], ["Average of Temperature", "22.44"], ["Count of Location_Type", "11.676K"],
];

export default function App() {
  return (
    <Page>
      <GlobalStyle />
      <TopBar>
        <Title>
          <TitleLine $hang={8}>{"Bird Species Observation "}</TitleLine>
          <TitleLine>Analysis</TitleLine>
        </Title>
        <Slicer title="Month" items={["July", "June", "May"]} w={231} gap={0.5} chevron={9} thumb={74} />
        <Slicer title="Location_T..." items={["Forest", "Grassland"]} w={151} gap={16} chevron={9} />
        <Slicer title="Common_Name" items={["Acadian Flycatcher", "American Crow", "American Goldfinch"]} w={202} gap={13} chevron={8} thumb={20} />
        <Slicer title="Observer" items={["Brian Swimelar", "Elizabeth Oswald", "Kimberly Serno"]} w={182} gap={12} chevron={9} raised />
      </TopBar>

      <KpiPanel>
        {kpis.map(([label, value], i) => (
          <KpiCard key={i}><KpiLabel>{label}</KpiLabel><KpiValue>{value}</KpiValue></KpiCard>
        ))}
      </KpiPanel>

      <Lower>
        <MatrixPanel>
          <HeadRow>
            <HeadCell $x={5}>Admin_Unit_Code</HeadCell>
            <HeadCell $x={5.5}>False</HeadCell>
            <HeadCell $x={5}>True</HeadCell>
            <HeadCell $x={5.5} $bold>Total</HeadCell>
          </HeadRow>
          {rows.map(([code, f, t, total], i) => (
            <Row key={code} $shade={i % 2 === 1 && i < 11} $total={i === 11}>
              <CodeCell><Expand hidden={i === 11} />{code}</CodeCell>
              <NumCell>{f}</NumCell>
              <NumCell>{t}</NumCell>
              <NumCell $bold>{total}</NumCell>
            </Row>
          ))}
        </MatrixPanel>

        <MapPanel>
          <MapTitle>Count of Common_Name by Site_Name and Location_Type</MapTitle>
          <Legend>
            <b>Location_Type</b>
            <LegendItem $c="#118dff">Forest</LegendItem>
            <LegendItem $c="#12239e">Grassland</LegendItem>
          </Legend>
          <MapView>
            <WorldMap />
            {regions.map(([t, x, y]) => <Region key={t} $x={x} $y={y}>{t}</Region>)}
            <Ocean $x={717} $y={464}>{"Atlantic\nOcean"}</Ocean>
            <Ocean $x={1070} $y={624}>{"Indian\nOcean"}</Ocean>
            <Dots width="868" height="372" viewBox="429 340 868 372">
              <circle cx="584" cy="431.5" r="16" fill="#12239e" fillOpacity="0.55" stroke="#0d1560" strokeWidth="1" />
              {dots.map(([x, y, r, o], i) => (
                <circle key={i} cx={x} cy={y} r={r} fill="#118dff" fillOpacity={o} stroke="#0a55d0" strokeWidth="1.2" />
              ))}
            </Dots>
            {tags.map(([t, x, y]) => <Tag key={t} $x={x} $y={y}>{t}</Tag>)}
            <ZoomIn aria-label="Zoom in">
              <svg width="32" height="32" stroke="#fff" strokeWidth="2"><path d="M7 16h18M16 7v18" /></svg>
            </ZoomIn>
            <ZoomOut aria-label="Zoom out">
              <svg width="32" height="32" stroke="#fff" strokeWidth="2"><path d="M7 16h18" /></svg>
            </ZoomOut>
            <Bing>
              <svg width="10" height="10">
                <path d="M0 0h4.7v4.7H0z" fill="#f25022" /><path d="M5.3 0H10v4.7H5.3z" fill="#7fba00" />
                <path d="M0 5.3h4.7V10H0z" fill="#00a4ef" /><path d="M5.3 5.3H10V10H5.3z" fill="#ffb900" />
              </svg>
              Microsoft Bing
            </Bing>
            <Credits>
              © 2025 TomTom, Earthstar Geographics SIO, © 2025 Microsoft Corporation,{" "}
              <CreditLink>© OpenStreetMap</CreditLink>
              <CreditLink>Terms</CreditLink>
            </Credits>
          </MapView>
        </MapPanel>
      </Lower>
    </Page>
  );
}
